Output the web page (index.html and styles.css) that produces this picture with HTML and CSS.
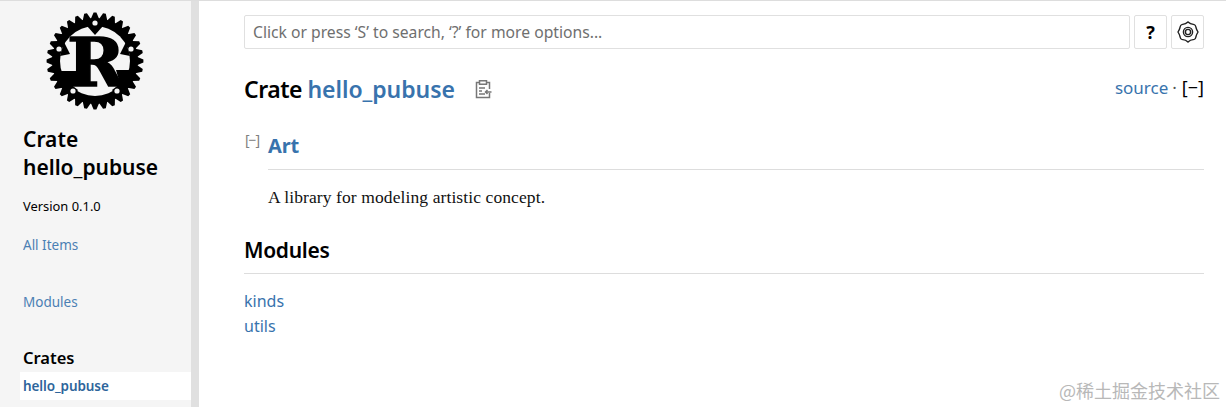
FILE: index.html
```html
<!DOCTYPE html>
<html lang="en">
<head>
<meta charset="utf-8">
<title>hello_pubuse - Rust</title>
<link rel="stylesheet" href="styles.css">
</head>
<body>
<nav class="sidebar">
  <svg class="logo" viewBox="0 0 98 98" aria-label="Rust logo">
    <defs>
      <polygon id="t1" points="44.8,7 47.6,.6 50.4,.6 53.2,7"/>
      <g id="t2"><use href="#t1"/><use href="#t1" transform="rotate(180 49 49)"/></g>
      <g id="t3"><use href="#t2"/><use href="#t2" transform="rotate(90 49 49)"/></g>
      <g id="t4"><use href="#t3"/><use href="#t3" transform="rotate(45 49 49)"/></g>
      <g id="t5"><use href="#t4"/><use href="#t4" transform="rotate(22.5 49 49)"/></g>
      <g id="t6"><use href="#t5"/><use href="#t5" transform="rotate(11.25 49 49)"/></g>
    </defs>
    <use href="#t6"/>
    <circle cx="49" cy="49" r="43" fill="#000"/>
    <circle cx="49" cy="49" r="35" fill="#f5f5f5"/>
    <polygon points="41,14 49,23 57,14"/>
    <polygon points="14,44 24,42 18,30"/>
    <polygon points="84,44 74,42 80,30"/>
    <polygon points="19,68 32,78 26,86"/>
    <polygon points="79,68 66,78 72,86"/>
    <rect x="14" y="59" width="16" height="15"/>
    <polygon points="70,58 83,58 83,66 74,72"/>
    <text class="logo-r" x="50" y="74" text-anchor="middle" textLength="58" lengthAdjust="spacingAndGlyphs">R</text>
    <circle class="rivet" cx="49" cy="11" r="2.6"/>
    <circle class="rivet" cx="13" cy="37" r="2.6"/>
    <circle class="rivet" cx="85" cy="37" r="2.6"/>
    <circle class="rivet" cx="27" cy="79" r="2.6"/>
    <circle class="rivet" cx="71" cy="79" r="2.6"/>
  </svg>
  <h2 class="side-title">Crate<br>hello_pubuse</h2>
  <p class="version">Version 0.1.0</p>
  <a class="side-link all" href="#">All Items</a>
  <a class="side-link modules" href="#">Modules</a>
  <h3 class="crates">Crates</h3>
  <a class="current" href="#">hello_pubuse</a>
</nav>
<main class="content">
  <div class="search-row">
    <input class="search" placeholder="Click or press ‘S’ to search, ‘?’ for more options...">
    <button class="square help">?</button>
    <button class="square" aria-label="Settings">
      <svg class="gear" viewBox="0 0 24 24">
        <path d="M12 2 C13.5 3.6 15 4.2 18.2 4.6 C19.5 4.8 19.6 5.6 20 7.5 C20.3 9 20.8 10 22 12 C20.8 14 20.3 15 20 16.5 C19.6 18.4 19.5 19.2 18.2 19.4 C15 19.8 13.5 20.4 12 22 C10.5 20.4 9 19.8 5.8 19.4 C4.5 19.2 4.4 18.4 4 16.5 C3.7 15 3.2 14 2 12 C3.2 10 3.7 9 4 7.5 C4.4 5.6 4.5 4.8 5.8 4.6 C9 4.2 10.5 3.6 12 2Z"/>
        <circle cx="12" cy="12" r="4.6"/>
        <circle cx="12" cy="12" r="2.6"/>
      </svg>
    </button>
  </div>
  <div class="title-row">
    <h1 class="title"><span>Crate <a href="#">hello_pubuse</a></span>
      <svg class="clip" viewBox="0 0 18 20">
        <path d="M5 3.5H2.5V18.5H15.5V14M15.5 10V3.5H13M5.5 1.8H12.5V5.2H5.5ZM5 9H11M5 12H8M5 15H11M17.5 13H11.5M13.5 11 11.5 13 13.5 15"/>
      </svg>
    </h1>
    <div class="out"><a href="#">source</a><span class="dot">·</span><span class="toggle">[−]</span></div>
  </div>
  <div class="doc-head">
    <span class="collapse">[−]</span>
    <h2 class="art"><a href="#">Art</a></h2>
  </div>
  <p class="doc">A library for modeling artistic concept.</p>
  <h2 class="section">Modules</h2>
  <ul class="mods">
    <li><a href="#">kinds</a></li>
    <li><a href="#">utils</a></li>
  </ul>
</main>
<div class="mark">@稀土掘金技术社区</div>
</body>
</html>
```
FILE: styles.css
```css
* { box-sizing: border-box; }
html, body { height: 100%; }
body {
  margin: 0;
  height: 407px;
  overflow: hidden;
  display: flex;
  background: #fff;
  color: #000;
  font-family: "Noto Sans", "Open Sans", sans-serif;
  border-top: 1px solid #ddd;
  position: relative;
}
a { color: #3873ad; text-decoration: none; }
.sidebar {
  width: 199px;
  flex: none;
  background: #f5f5f5;
  border-right: 8px solid #e0e0e0;
  padding-top: 11px;
  display: flex;
  flex-direction: column;
  align-items: flex-start;
}
.logo { width: 98px; height: 98px; margin-left: 46px; display: block; }
.logo-r { font: bold 68px "DejaVu Serif", serif; stroke: #000; stroke-width: 1.6px; }
.rivet { fill: #f5f5f5; }
.side-title {
  margin: 15px 0 0 23px;
  font-size: 21px;
  line-height: 28px;
  font-weight: 600;
}
.version { margin: 15px 0 0 23px; font-size: 12.9px; line-height: 20px; }
.side-link { margin-left: 23px; font-size: 13.5px; line-height: 20px; opacity: .9; }
.all { margin-top: 19px; }
.modules { margin-top: 37px; }
.crates { margin: 34px 0 0 23px; font-size: 16.5px; line-height: 24px; font-weight: 600; }
.current {
  margin: 2px 0 0 20px;
  width: 171px;
  height: 28px;
  padding-left: 3px;
  background: #fff;
  font-size: 13.5px;
  line-height: 28px;
  font-weight: 600;
  letter-spacing: -.1px;
  color: #2e659b;
}
.content { flex: 1; padding: 14px 22px 0 45px; min-width: 0; }
.search-row { display: flex; gap: 4px; height: 34px; }
.search {
  flex: 1;
  min-width: 0;
  border: 1px solid #e0e0e0;
  border-radius: 2px;
  padding: 0 8px;
  font: 15.7px "Noto Sans", sans-serif;
  background: #fff;
}
.search::placeholder { color: #6f6f6f; opacity: 1; }
.square {
  width: 33px;
  height: 34px;
  padding: 0;
  display: flex;
  align-items: center;
  justify-content: center;
  background: #fff;
  border: 1px solid #e0e0e0;
  border-radius: 2px;
}
.help { font: 700 18px "Noto Sans", sans-serif; color: #000; }
.gear { width: 24px; height: 24px; fill: none; stroke: #222; stroke-width: 1.4; }
.title-row { display: flex; justify-content: space-between; margin-top: 24px; }
.title {
  margin: 0;
  font-size: 23px;
  line-height: 32px;
  font-weight: 600;
  letter-spacing: -.5px;
  display: flex;
  align-items: center;
}
.title a { letter-spacing: -.05px; }
.clip { width: 18px; height: 20px; margin-left: 19px; fill: none; stroke: #777; stroke-width: 1.5; }
.out { font-size: 17px; line-height: 24px; padding-top: 2px; }
.dot { margin: 0 5px 0 4px; color: #555; }
.toggle { color: #000; font-size: 18px; }
.doc-head { display: flex; margin-top: 25px; position: relative; }
.collapse {
  position: absolute;
  left: 1px;
  top: 1px;
  color: #808080;
  font-size: 14px;
  line-height: 18px;
  letter-spacing: -1px;
}
.art {
  flex: 1;
  margin: 0 0 0 24px;
  font-size: 20px;
  line-height: 31px;
  font-weight: 700;
  letter-spacing: -.2px;
  border-bottom: 1px solid #ddd;
  padding-bottom: 8px;
}
.doc {
  margin: 15px 0 0 24px;
  font: 17.5px/24px "Liberation Serif", serif;
  letter-spacing: .1px;
  color: #111;
}
.section {
  margin: 26px 0 0;
  font-size: 21px;
  line-height: 31px;
  font-weight: 600;
  letter-spacing: -.3px;
  border-bottom: 1px solid #ddd;
  padding-bottom: 7px;
}
.mods { list-style: none; margin: 15px 0 0; padding: 0; font-size: 16px; line-height: 25px; }
.mark {
  position: absolute;
  right: 6px;
  bottom: 4px;
  font: 18px "Noto Sans CJK SC", sans-serif;
  color: #b8b8b8;
}
```
